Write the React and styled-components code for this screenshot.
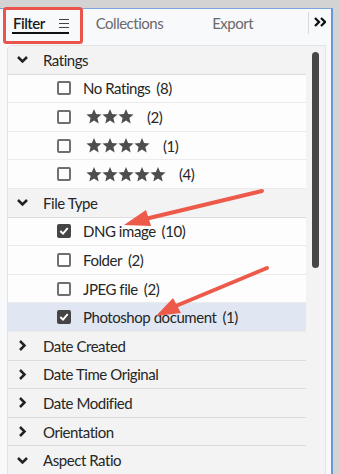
import React from 'react';
import styled, { createGlobalStyle } from 'styled-components';

const Global = createGlobalStyle`
  html, body { margin: 0; padding: 0; background: #d3d3d3; }
  body { font-family: Lato, "Liberation Sans", sans-serif; }
`;

//style
const Page = styled.div`
  position: relative;
  width: 339px;
  height: 474px;
  overflow: hidden;
  padding-top: 8px;
  box-sizing: border-box;
`;

const Panel = styled.div`
  width: 333px;
  height: 466px;
  box-sizing: border-box;
  background: #f8f9fb;
  border-top: 1px solid #7ea6dc;
  border-right: 2px solid #6b96d6;
  display: flex;
  flex-direction: column;
`;

const Tabs = styled.div`
  height: 36px;
  display: flex;
  align-items: center;
  position: relative;
`;

const Tab = styled.div`
  display: flex;
  align-items: center;
  gap: 14px;
  font-size: 15px;
  letter-spacing: -0.5px;
  color: ${p => (p.$active ? '#1c1c1c' : '#6a6a6a')};
  font-weight: ${p => (p.$active ? 600 : 400)};
  margin-left: ${p => p.$left}px;
  height: 100%;
  position: relative;
  padding-bottom: 8px;
  box-sizing: border-box;
  ${p => p.$active && `
    &::after {
      content: '';
      position: absolute;
      left: -1px;
      right: 0;
      bottom: 11px;
      height: 2px;
      background: #111;
    }
  `}
`;

const TabSep = styled.div`
  width: 1px;
  height: 22px;
  background: #dadada;
  margin-left: auto;
  margin-bottom: 8px;
`;

const More = styled.div`
  width: 22px;
  display: flex;
  justify-content: center;
  padding-bottom: 10px;
`;

const Body = styled.div`
  flex: 1;
  display: flex;
  margin-left: 7px;
  margin-right: 5px;
  background: #f3f3f3;
  border: 1px solid #e3e3e3;
  border-bottom: none;
  border-top-left-radius: 5px;
  overflow: hidden;
`;

const List = styled.div`
  width: 298px;
  display: flex;
  flex-direction: column;
`;

const Gutter = styled.div`
  flex: 1;
  display: flex;
  justify-content: center;
  padding-top: 6px;
`;

const Thumb = styled.div`
  width: 7px;
  height: 216px;
  border-radius: 4px;
  background: #474747;
`;

const Header = styled.div`
  height: 28.6px;
  flex-shrink: 0;
  box-sizing: border-box;
  display: flex;
  align-items: center;
  padding-left: 9px;
  gap: 15px;
  font-size: 15px;
  letter-spacing: -0.45px;
  color: #262626;
  border-bottom: 1px solid #dcdcdc;
  background: #f3f3f3;
`;

const Item = styled.div`
  height: 28.6px;
  flex-shrink: 0;
  box-sizing: border-box;
  display: flex;
  align-items: center;
  padding-left: 49px;
  font-size: 15px;
  letter-spacing: -0.45px;
  color: #262626;
  background: ${p => (p.$selected ? '#e1e7f2' : '#fdfdfd')};
  border-bottom: 1px solid #ebebeb;
`;

const Box = styled.span`
  width: 14px;
  height: 14px;
  box-sizing: border-box;
  border-radius: 2px;
  border: 2px solid ${p => (p.$checked ? '#454545' : '#6f6f6f')};
  background: ${p => (p.$checked ? '#454545' : 'transparent')};
  display: flex;
  align-items: center;
  justify-content: center;
  margin-right: 12px;
`;

const Label = styled.span`
  display: flex;
  align-items: center;
  white-space: nowrap;
`;

const Count = styled.span`
  margin-left: ${p => p.$gap || 6}px;
`;

const Stars = styled.span`
  display: flex;
  margin-left: 3px;
`;

const Annot = styled.svg`
  position: absolute;
  left: 0;
  top: 0;
  pointer-events: none;
`;
//Style End here

const Chevron = ({ open }) => (
  <svg width="11" height="11" viewBox="0 0 11 11">
    {open
      ? <polyline points="1,3 5.5,7.5 10,3" fill="none" stroke="#222" strokeWidth="2.5" />
      : <polyline points="3,1 7.5,5.5 3,10" fill="none" stroke="#222" strokeWidth="2.5" />}
  </svg>
);

const Star = () => (
  <svg width="16" height="15" viewBox="0 0 24 23">
    <polygon fill="#4e4e4e" points="12,0 15.2,7.7 23.6,8.4 17.2,13.9 19.2,22.4 12,17.8 4.8,22.4 6.8,13.9 0.4,8.4 8.8,7.7" />
  </svg>
);

const Check = () => (
  <svg width="10" height="10" viewBox="0 0 10 10">
    <polyline points="1.3,5 4,7.6 8.7,2.2" fill="none" stroke="#fff" strokeWidth="2" />
  </svg>
);

const Row = ({ checked, selected, children }) => (
  <Item $selected={selected}>
    <Box $checked={checked}>{checked && <Check />}</Box>
    <Label>{children}</Label>
  </Item>
);

const StarRow = ({ n, count }) => (
  <Row>
    <Stars>{Array.from({ length: n }).map((_, i) => <Star key={i} />)}</Stars>
    <Count $gap={13}>({count})</Count>
  </Row>
);

const App = () => {
  return (
    <Page>
      <Global />
      <Panel>
        <Tabs>
          <Tab $active $left={13}>
            Filter
            <svg width="10" height="9" viewBox="0 0 10 9">
              <path d="M0 0.5h10M0 4.5h10M0 8.5h10" stroke="#444" strokeWidth="1.2" />
            </svg>
          </Tab>
          <Tab $left={27}>Collections</Tab>
          <Tab $left={49}>Export</Tab>
          <TabSep />
          <More>
            <svg width="12" height="10" viewBox="0 0 12 10">
              <polyline points="1,1 5,5 1,9" fill="none" stroke="#111" strokeWidth="2.3" />
              <polyline points="7,1 11,5 7,9" fill="none" stroke="#111" strokeWidth="2.3" />
            </svg>
          </More>
        </Tabs>
        <Body>
          <List>
            <Header><Chevron open />Ratings</Header>
            <Row><Label>No Ratings<Count>(8)</Count></Label></Row>
            <StarRow n={3} count={2} />
            <StarRow n={4} count={1} />
            <StarRow n={5} count={4} />
            <Header><Chevron open />File Type</Header>
            <Row checked>DNG image<Count>(10)</Count></Row>
            <Row>Folder<Count>(2)</Count></Row>
            <Row>JPEG file<Count>(2)</Count></Row>
            <Row checked selected>Photoshop document<Count>(1)</Count></Row>
            <Header><Chevron />Date Created</Header>
            <Header><Chevron />Date Time Original</Header>
            <Header><Chevron />Date Modified</Header>
            <Header><Chevron />Orientation</Header>
            <Header><Chevron open />Aspect Ratio</Header>
          </List>
          <Gutter><Thumb /></Gutter>
        </Body>
      </Panel>

      <Annot width="339" height="474" viewBox="0 0 339 474">
        <rect x="4.5" y="8.5" width="77" height="34" rx="2" fill="none" stroke="#e9544b" strokeWidth="3" />
        <line x1="262" y1="191" x2="141" y2="220" stroke="#ee5a49" strokeWidth="4" strokeLinecap="round" />
        <polygon points="124,225 146,210 151,226" fill="#ee5a49" />
        <line x1="267" y1="268" x2="171" y2="308" stroke="#ee5a49" strokeWidth="4" strokeLinecap="round" />
        <polygon points="156,316 173,298 181,313" fill="#ee5a49" />
      </Annot>
    </Page>
  );
};

export default App;
